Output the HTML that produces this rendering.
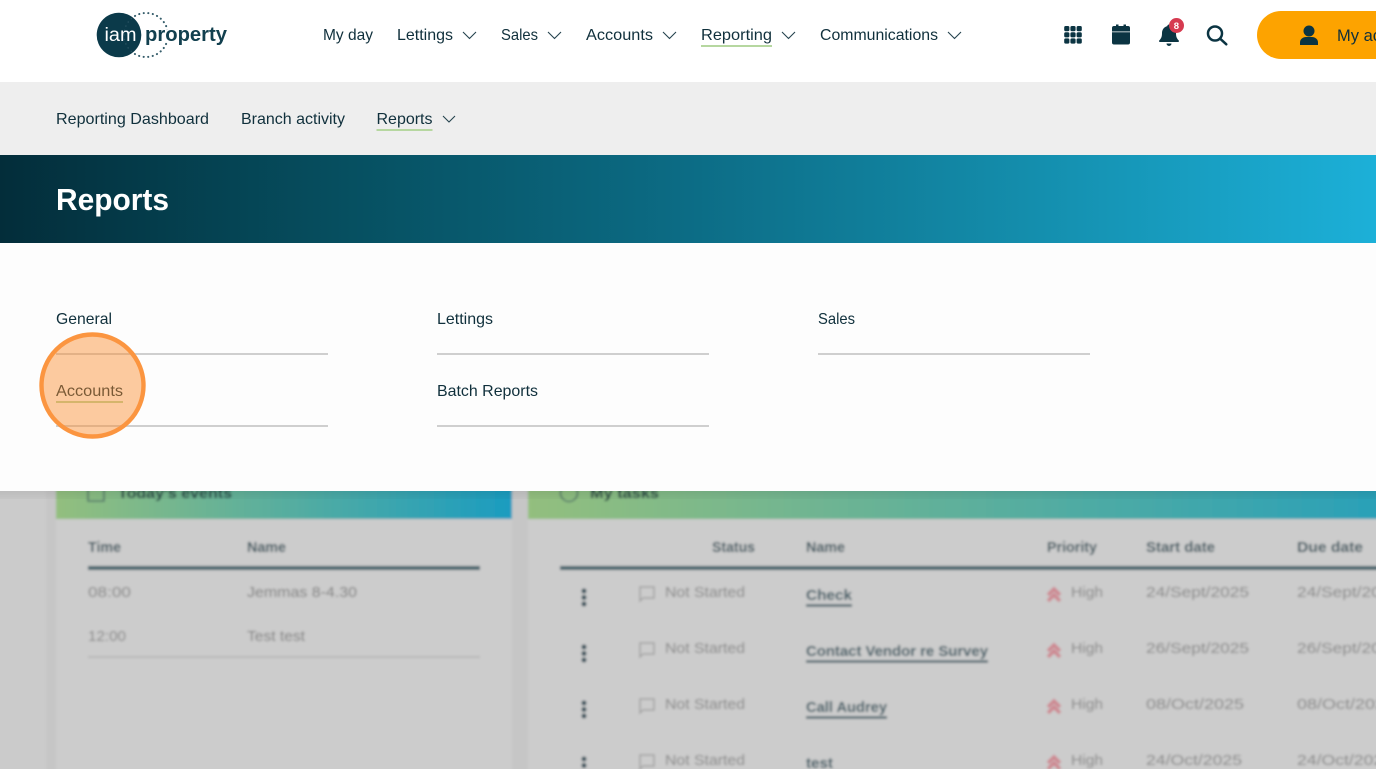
<!DOCTYPE html>
<html><head><meta charset="utf-8"><title>Reports</title>
<style>
html,body{margin:0;padding:0;background:#ccc;width:1376px;height:769px;overflow:hidden}
svg{display:block;position:absolute;left:0;top:0}
text{font-family:"Liberation Sans",sans-serif;fill:#10303c}
</style></head><body>
<svg width="1376" height="769" viewBox="0 0 1376 769" xmlns="http://www.w3.org/2000/svg">
<defs>
<linearGradient id="ban" x1="0" x2="1" y1="0" y2="0"><stop offset="0" stop-color="#032d3a"/><stop offset=".25" stop-color="#064f60"/><stop offset=".5" stop-color="#0c6c85"/><stop offset=".75" stop-color="#148ead"/><stop offset="1" stop-color="#1cb0d8"/></linearGradient>
<linearGradient id="card1" x1="0" x2="1" y1="0" y2="0"><stop offset="0" stop-color="#93bf7e"/><stop offset="1" stop-color="#1b9cc0"/></linearGradient>
<linearGradient id="card2" x1="528" x2="1500" y1="0" y2="0" gradientUnits="userSpaceOnUse"><stop offset="0" stop-color="#93bf7e"/><stop offset="1" stop-color="#1b9cc0"/></linearGradient>
<filter id="b" x="-5%" y="-5%" width="110%" height="110%"><feGaussianBlur stdDeviation="1.300"/></filter>
<filter id="s" x="-5%" y="-50%" width="110%" height="200%"><feGaussianBlur stdDeviation="6"/></filter>
</defs>

<!-- blurred page behind -->
<g filter="url(#b)">
<rect x="-10" y="470" width="1396" height="310" fill="#cbcbcb"/>
<rect x="46" y="470" width="476" height="310" fill="#c6c6c6"/>
<rect x="56" y="470" width="456" height="310" fill="#cccccc"/>
<rect x="56" y="470" width="456" height="49" fill="url(#card1)"/>
<rect x="518" y="470" width="900" height="310" fill="#c6c6c6"/>
<rect x="528" y="470" width="860" height="310" fill="#cccccc"/>
<rect x="528" y="470" width="860" height="49" fill="url(#card2)"/>
<rect x="88" y="487" width="16" height="14" fill="none" stroke="#4d6f66" stroke-width="1.500"/>
<text x="118" y="498" font-size="15" font-weight="700" textLength="114" lengthAdjust="spacingAndGlyphs" style="fill:#1c3d40">Today's events</text>
<circle cx="569" cy="493" r="8.500" fill="none" stroke="#4d6f66" stroke-width="1.500"/>
<text x="590" y="498" font-size="15" font-weight="700" textLength="69" lengthAdjust="spacingAndGlyphs" style="fill:#1c3d40">My tasks</text>

<g font-size="15" font-weight="700">
<text x="88" y="552" textLength="33" lengthAdjust="spacingAndGlyphs" style="fill:#38525c">Time</text>
<text x="247" y="552" textLength="39" lengthAdjust="spacingAndGlyphs" style="fill:#38525c">Name</text>
<text x="712" y="552" textLength="43" lengthAdjust="spacingAndGlyphs" style="fill:#38525c">Status</text>
<text x="806" y="552" textLength="39" lengthAdjust="spacingAndGlyphs" style="fill:#38525c">Name</text>
<text x="1047" y="552" textLength="50" lengthAdjust="spacingAndGlyphs" style="fill:#38525c">Priority</text>
<text x="1146" y="552" textLength="69" lengthAdjust="spacingAndGlyphs" style="fill:#38525c">Start date</text>
<text x="1297" y="552" textLength="66" lengthAdjust="spacingAndGlyphs" style="fill:#38525c">Due date</text>
</g>
<rect x="88" y="566" width="392" height="4" fill="#40606a"/>
<rect x="560" y="566" width="830" height="4" fill="#40606a"/>
<rect x="88" y="656" width="392" height="2" fill="#b8b8b8"/>

<g font-size="15">
<text x="88" y="597" textLength="43" lengthAdjust="spacingAndGlyphs" style="fill:#858585">08:00</text>
<text x="247" y="597" textLength="110" lengthAdjust="spacingAndGlyphs" style="fill:#7c7c7c">Jemmas 8-4.30</text>
<text x="88" y="641" textLength="38" lengthAdjust="spacingAndGlyphs" style="fill:#858585">12:00</text>
<text x="247" y="641" textLength="58" lengthAdjust="spacingAndGlyphs" style="fill:#7c7c7c">Test test</text>
</g>

<!-- task rows -->
<g fill="#2f4b56">
<circle cx="584" cy="591" r="2.500"/><circle cx="584" cy="597.500" r="2.500"/><circle cx="584" cy="604" r="2.500"/>
<circle cx="584" cy="647" r="2.500"/><circle cx="584" cy="653.500" r="2.500"/><circle cx="584" cy="660" r="2.500"/>
<circle cx="584" cy="703" r="2.500"/><circle cx="584" cy="709.500" r="2.500"/><circle cx="584" cy="716" r="2.500"/>
<circle cx="584" cy="759" r="2.500"/><circle cx="584" cy="765.500" r="2.500"/>
</g>
<g fill="none" stroke="#a2a2a2" stroke-width="1.500">
<path d="M640 587h14v11h-11l-3 3z"/><path d="M640 643h14v11h-11l-3 3z"/><path d="M640 699h14v11h-11l-3 3z"/><path d="M640 755h14v11h-11l-3 3z"/>
</g>
<g font-size="15">
<text x="665" y="597" textLength="80" lengthAdjust="spacingAndGlyphs" style="fill:#858585">Not Started</text>
<text x="665" y="653" textLength="80" lengthAdjust="spacingAndGlyphs" style="fill:#858585">Not Started</text>
<text x="665" y="709" textLength="80" lengthAdjust="spacingAndGlyphs" style="fill:#858585">Not Started</text>
<text x="665" y="765" textLength="80" lengthAdjust="spacingAndGlyphs" style="fill:#858585">Not Started</text>
<g font-weight="700">
<text x="806" y="600" textLength="46" lengthAdjust="spacingAndGlyphs" style="fill:#34545f">Check</text>
<text x="806" y="656" textLength="182" lengthAdjust="spacingAndGlyphs" style="fill:#34545f">Contact Vendor re Survey</text>
<text x="806" y="712" textLength="81" lengthAdjust="spacingAndGlyphs" style="fill:#34545f">Call Audrey</text>
<text x="806" y="768" textLength="27" lengthAdjust="spacingAndGlyphs" style="fill:#34545f">test</text>
</g>
<text x="1071" y="597" textLength="32" lengthAdjust="spacingAndGlyphs" style="fill:#858585">High</text>
<text x="1071" y="653" textLength="32" lengthAdjust="spacingAndGlyphs" style="fill:#858585">High</text>
<text x="1071" y="709" textLength="32" lengthAdjust="spacingAndGlyphs" style="fill:#858585">High</text>
<text x="1071" y="765" textLength="32" lengthAdjust="spacingAndGlyphs" style="fill:#858585">High</text>
<text x="1146" y="597" textLength="103" lengthAdjust="spacingAndGlyphs" style="fill:#858585">24/Sept/2025</text>
<text x="1146" y="653" textLength="103" lengthAdjust="spacingAndGlyphs" style="fill:#858585">26/Sept/2025</text>
<text x="1146" y="709" textLength="98" lengthAdjust="spacingAndGlyphs" style="fill:#858585">08/Oct/2025</text>
<text x="1146" y="765" textLength="96" lengthAdjust="spacingAndGlyphs" style="fill:#858585">24/Oct/2025</text>
<text x="1297" y="597" textLength="103" lengthAdjust="spacingAndGlyphs" style="fill:#858585">24/Sept/2025</text>
<text x="1297" y="653" textLength="103" lengthAdjust="spacingAndGlyphs" style="fill:#858585">26/Sept/2025</text>
<text x="1297" y="709" textLength="98" lengthAdjust="spacingAndGlyphs" style="fill:#858585">08/Oct/2025</text>
<text x="1297" y="765" textLength="96" lengthAdjust="spacingAndGlyphs" style="fill:#858585">24/Oct/2025</text>
</g>
<g fill="none" stroke="#34545f" stroke-width="2.200">
<path d="M806 605.500h46M806 661.500h182M806 717.500h81"/>
</g>
<g fill="none" stroke="#cd8791" stroke-width="3.600">
<path d="M1048 595l6-6 6 6M1048 601l6-6 6 6"/><path d="M1048 651l6-6 6 6M1048 657l6-6 6 6"/><path d="M1048 707l6-6 6 6M1048 713l6-6 6 6"/><path d="M1048 763l6-6 6 6M1048 769l6-6 6 6"/>
</g>
</g>

<!-- panel shadow on page -->
<rect x="-20" y="484" width="1416" height="10" fill="#000" fill-opacity=".12" filter="url(#s)"/>

<!-- header -->
<rect x="0" y="0" width="1376" height="83" fill="#ffffff"/>
<rect x="0" y="82" width="1376" height="73" fill="#eeeeee"/>
<rect x="0" y="155" width="1376" height="88" fill="url(#ban)"/>
<rect x="0" y="243" width="1376" height="248" fill="#fdfdfd"/>

<!-- logo -->
<circle cx="146" cy="35" r="22" fill="none" stroke="#2c5563" stroke-width="2" stroke-linecap="round" stroke-dasharray="0.100 4.500"/>
<circle cx="119" cy="35" r="22.300" fill="#0b3a4a"/>
<circle cx="146" cy="35" r="22" fill="none" stroke="#3f6674" stroke-width="1.400" stroke-linecap="round" stroke-dasharray="0.100 4.500" opacity=".6"/>
<text x="104.500" y="41" font-size="19" textLength="32" lengthAdjust="spacingAndGlyphs" style="fill:#fff">iam</text>
<text x="145" y="41" font-size="20" font-weight="700" textLength="82" lengthAdjust="spacingAndGlyphs" style="fill:#12404f;stroke:#fff;stroke-width:3;paint-order:stroke">property</text>

<!-- main nav -->
<g font-size="16">
<text x="323" y="40" textLength="50" lengthAdjust="spacingAndGlyphs">My day</text>
<text x="397" y="40" textLength="56" lengthAdjust="spacingAndGlyphs">Lettings</text>
<text x="501" y="40" textLength="37" lengthAdjust="spacingAndGlyphs">Sales</text>
<text x="586" y="40" textLength="67" lengthAdjust="spacingAndGlyphs">Accounts</text>
<text x="701" y="40" textLength="71" lengthAdjust="spacingAndGlyphs">Reporting</text>
<text x="820" y="40" textLength="118" lengthAdjust="spacingAndGlyphs">Communications</text>
</g>
<rect x="701" y="45" width="71" height="2" fill="#b6d7a0"/>
<g fill="none" stroke="#24424e" stroke-width="1.100">
<path d="M463 32l6.500 6.500 6.500-6.500M548 32l6.500 6.500 6.500-6.500M663 32l6.500 6.500 6.500-6.500M782 32l6.500 6.500 6.500-6.500M948 32l6.500 6.500 6.500-6.500"/>
</g>

<!-- icons -->
<g fill="#0b3442">
<rect x="1064.200" y="26" width="5.200" height="5.200" rx="1.500"/><rect x="1070.400" y="26" width="5.200" height="5.200" rx="1.500"/><rect x="1076.600" y="26" width="5.200" height="5.200" rx="1.500"/>
<rect x="1064.200" y="32.200" width="5.200" height="5.200" rx="1.500"/><rect x="1070.400" y="32.200" width="5.200" height="5.200" rx="1.500"/><rect x="1076.600" y="32.200" width="5.200" height="5.200" rx="1.500"/>
<rect x="1064.200" y="38.400" width="5.200" height="5.200" rx="1.500"/><rect x="1070.400" y="38.400" width="5.200" height="5.200" rx="1.500"/><rect x="1076.600" y="38.400" width="5.200" height="5.200" rx="1.500"/>
<path d="M1112 31.500v-3.500a2 2 0 0 1 2-2h2v-1.500h2.500v1.500h5v-1.500h2.500v1.500h2a2 2 0 0 1 2 2v3.500zM1112 32.300h18V42.500a2 2 0 0 1-2 2h-14a2 2 0 0 1-2-2z"/>
<path d="M1169 24.500c1 0 1.700.7 1.700 1.600 3.300.8 5.300 3.600 5.300 7 0 4 1 5.500 2.800 7.400.4.500.1 1.500-.8 1.500h-18c-.9 0-1.200-1-.8-1.500 1.800-1.900 2.800-3.400 2.800-7.400 0-3.400 2-6.200 5.300-7 0-.9.700-1.600 1.700-1.600zM1166.500 43.500h5a2.500 2.500 0 0 1-5 0z"/>
</g>
<circle cx="1176.500" cy="25.500" r="7.500" fill="#d63a50"/>
<text x="1173.800" y="29" font-size="9.500" font-weight="700" style="fill:#fff">8</text>
<g fill="none" stroke="#0b3442" stroke-width="2.500"><circle cx="1215" cy="33.500" r="7"/><path d="M1220.300 38.800l6 5.500" stroke-linecap="round"/></g>
<path d="M1281 11h120v48h-120a24 24 0 0 1 0-48z" fill="#fda300"/>
<g fill="#0b3442"><circle cx="1309" cy="31" r="5.500"/><path d="M1300 45v-2.500c0-3.500 3-5.500 6-5.500h6c3 0 6 2 6 5.500v2.500z"/></g>
<text x="1337" y="41" font-size="16.500">My account</text>

<!-- sub nav -->
<g font-size="16">
<text x="56" y="124" textLength="153" lengthAdjust="spacingAndGlyphs">Reporting Dashboard</text>
<text x="241" y="124" textLength="104" lengthAdjust="spacingAndGlyphs">Branch activity</text>
<text x="376.500" y="124" textLength="56" lengthAdjust="spacingAndGlyphs">Reports</text>
</g>
<rect x="376.500" y="129" width="56" height="2" fill="#b6d7a0"/>
<path d="M443 116l6 6 6-6" fill="none" stroke="#24424e" stroke-width="1.100"/>

<!-- banner -->
<text x="56" y="210" font-size="31" font-weight="700" textLength="113" lengthAdjust="spacingAndGlyphs" style="fill:#fff">Reports</text>

<!-- reports list -->
<g font-size="16">
<text x="56" y="324" textLength="56" lengthAdjust="spacingAndGlyphs">General</text>
<text x="437" y="324" textLength="56" lengthAdjust="spacingAndGlyphs">Lettings</text>
<text x="818" y="324" textLength="37" lengthAdjust="spacingAndGlyphs">Sales</text>
<text x="56" y="396" textLength="67" lengthAdjust="spacingAndGlyphs">Accounts</text>
<text x="437" y="396" textLength="101" lengthAdjust="spacingAndGlyphs">Batch Reports</text>
</g>
<g fill="#cfcfcf">
<rect x="56" y="353" width="272" height="2"/><rect x="437" y="353" width="272" height="2"/><rect x="818" y="353" width="272" height="2"/>
<rect x="56" y="425" width="272" height="2"/><rect x="437" y="425" width="272" height="2"/>
</g>
<rect x="56" y="401" width="67" height="2" fill="#b6d7a0"/>

<!-- highlight -->
<circle cx="92.500" cy="385.500" r="51" fill="#fb8c2c" fill-opacity=".45" stroke="#fb9540" stroke-width="4.400"/>
</svg>
</body></html>
